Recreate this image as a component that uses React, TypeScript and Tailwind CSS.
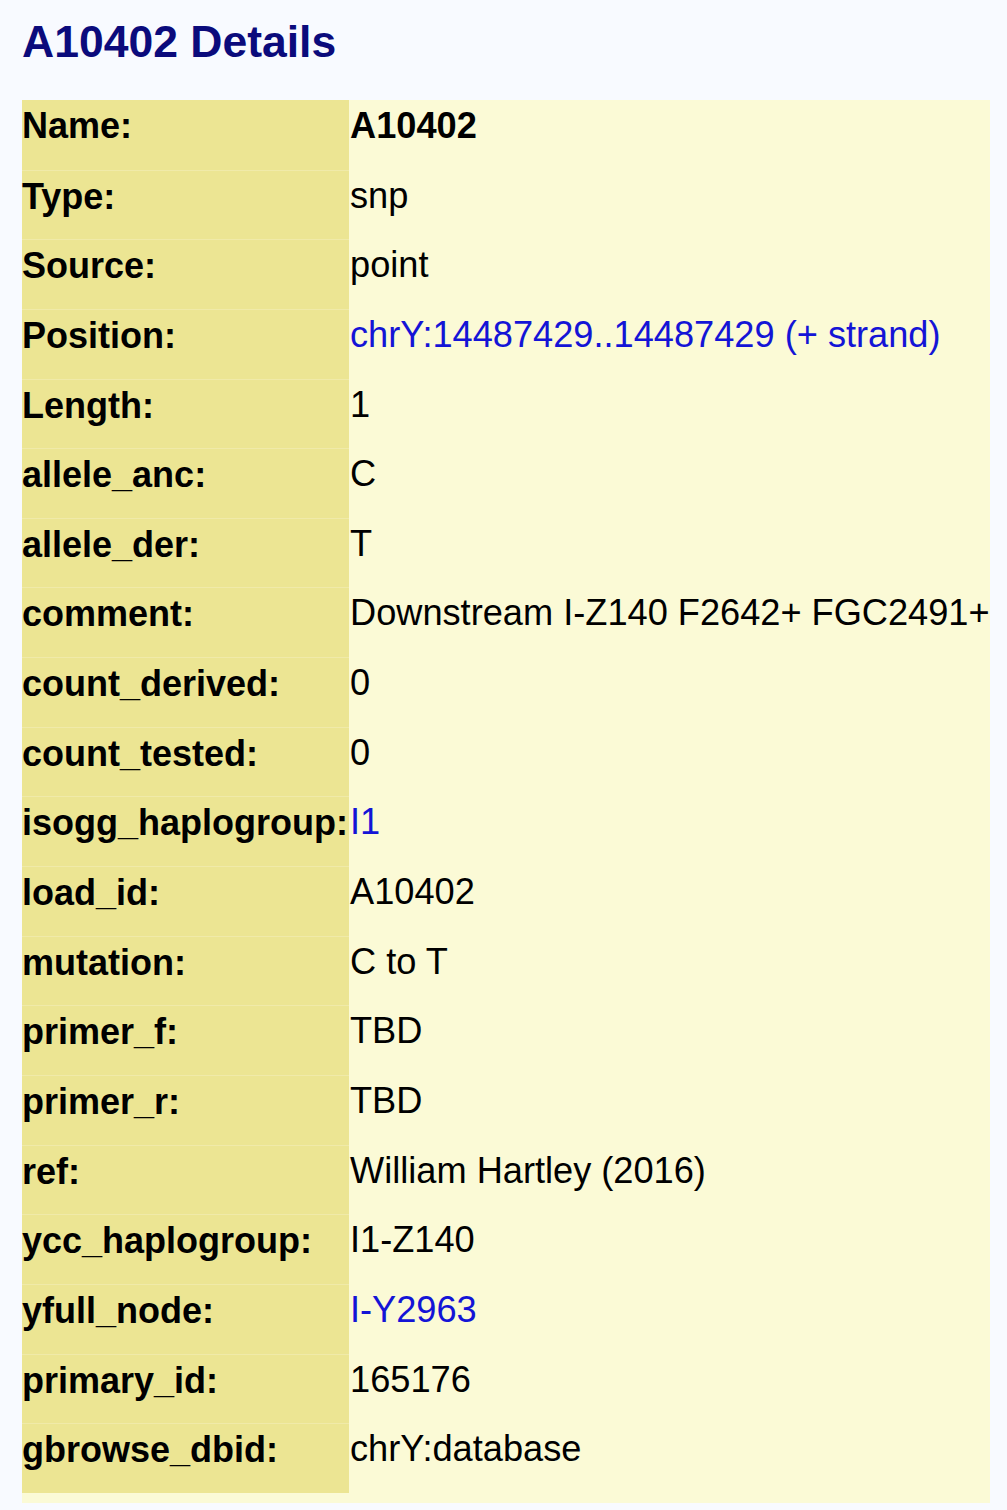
const rows: { label: string; value: string; link?: boolean; bold?: boolean }[] = [
  { label: "Name:", value: "A10402", bold: true },
  { label: "Type:", value: "snp" },
  { label: "Source:", value: "point" },
  { label: "Position:", value: "chrY:14487429..14487429 (+ strand)", link: true },
  { label: "Length:", value: "1" },
  { label: "allele_anc:", value: "C" },
  { label: "allele_der:", value: "T" },
  { label: "comment:", value: "Downstream I-Z140 F2642+ FGC2491+" },
  { label: "count_derived:", value: "0" },
  { label: "count_tested:", value: "0" },
  { label: "isogg_haplogroup:", value: "I1", link: true },
  { label: "load_id:", value: "A10402" },
  { label: "mutation:", value: "C to T" },
  { label: "primer_f:", value: "TBD" },
  { label: "primer_r:", value: "TBD" },
  { label: "ref:", value: "William Hartley (2016)" },
  { label: "ycc_haplogroup:", value: "I1-Z140" },
  { label: "yfull_node:", value: "I-Y2963", link: true },
  { label: "primary_id:", value: "165176" },
  { label: "gbrowse_dbid:", value: "chrY:database" },
];

export default function App() {
  return (
    <div
      className="min-h-[1510px] bg-[#f8faff] pl-[22px] pt-[16px] text-black"
      style={{ fontFamily: '"Liberation Sans", Arial, Helvetica, sans-serif' }}
    >
      <h1 className="text-[44.5px] font-bold leading-[51px] text-[#0b0b7c]">A10402 Details</h1>
      <div className="mt-[33px] w-[968px] bg-[#fbfad6] pb-[10px]">
        {rows.map((r, i) => (
          <div key={r.label} className="flex h-[69.65px]">
            <div
              className={`w-[327px] bg-[#ece593] pt-[8px] text-[36px] font-bold leading-[36px] whitespace-nowrap ${
                i > 0 ? "border-t border-[#f0eaa9]" : ""
              }`}
            >
              {r.label}
            </div>
            <div
              className={`ml-px pt-[8px] text-[36.2px] leading-[36px] whitespace-nowrap ${
                r.bold ? "font-bold" : ""
              } ${r.link ? "text-[#1414d6]" : ""}`}
            >
              {r.value}
            </div>
          </div>
        ))}
      </div>
    </div>
  );
}
